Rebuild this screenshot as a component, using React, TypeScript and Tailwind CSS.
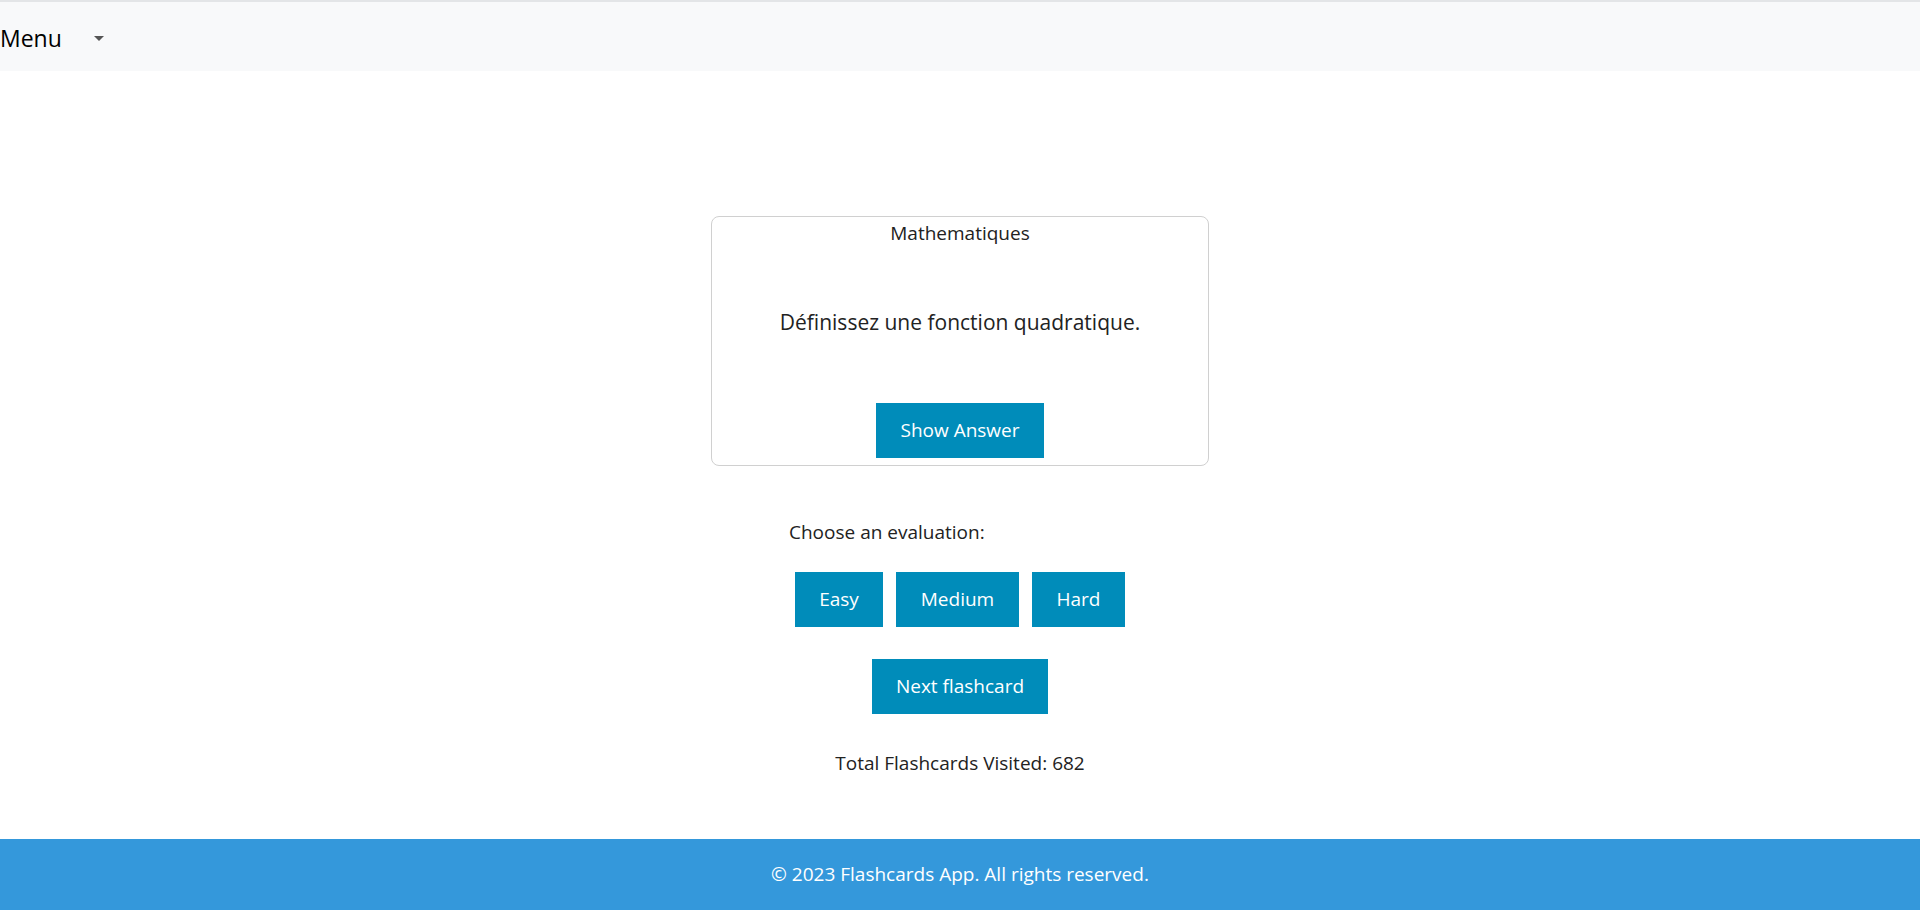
import { useState } from "react";

const font = { fontFamily: '"Open Sans", "Noto Sans", sans-serif' };

export default function App() {
  const [visited, setVisited] = useState(682);
  const [showAnswer, setShowAnswer] = useState(false);

  return (
    <div className="min-h-screen flex flex-col bg-white text-[#222]" style={font}>
      {/* Top menu bar */}
      <nav className="h-[71px] border-t-2 border-[#e3e5e7] bg-[#f8f9fa] flex items-center">
        <button className="flex items-center text-[23px] text-black leading-none pt-[3px]">
          Menu
          <span className="ml-[32px] mt-[1px] w-0 h-0 border-l-[5px] border-r-[5px] border-t-[5px] border-l-transparent border-r-transparent border-t-[#555]" />
        </button>
      </nav>

      {/* Flashcard */}
      <main className="flex-1 flex flex-col items-center pt-[145px]">
        <div className="w-[498px] h-[250px] border border-[#d0d0d0] rounded-lg flex flex-col items-center">
          <div className="pt-[4px] text-[19px] leading-6">Mathematiques</div>
          <div className="mt-[63px] text-[21px] leading-7">
            {showAnswer ? "f(x) = ax² + bx + c, avec a ≠ 0." : "Définissez une fonction quadratique."}
          </div>
          <button
            onClick={() => setShowAnswer(!showAnswer)}
            className="mt-[67px] w-[168px] h-[55px] bg-[#008cba] text-white text-[19px]"
          >
            Show Answer
          </button>
        </div>

        <div className="mt-[54px] w-[342px] text-left text-[19px] leading-6">
          Choose an evaluation:
        </div>
        <div className="mt-[28px] flex gap-[13px]">
          <button className="w-[88px] h-[55px] bg-[#008cba] text-white text-[19px]">Easy</button>
          <button className="w-[123px] h-[55px] bg-[#008cba] text-white text-[19px]">Medium</button>
          <button className="w-[93px] h-[55px] bg-[#008cba] text-white text-[19px]">Hard</button>
        </div>

        <button
          onClick={() => {
            setVisited(visited + 1);
            setShowAnswer(false);
          }}
          className="mt-[32px] w-[176px] h-[55px] bg-[#008cba] text-white text-[19px]"
        >
          Next flashcard
        </button>

        <div className="mt-[37px] text-[19px] leading-6">Total Flashcards Visited: {visited}</div>
      </main>

      {/* Footer */}
      <footer className="h-[71px] bg-[#3498db] flex items-center justify-center text-white text-[19px]">
        © 2023 Flashcards App. All rights reserved.
      </footer>
    </div>
  );
}
